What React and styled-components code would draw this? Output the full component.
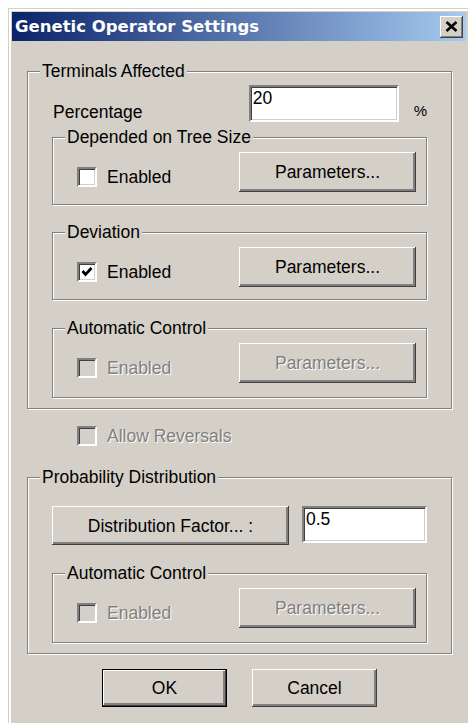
import styled, { createGlobalStyle } from "styled-components";

const GlobalStyle = createGlobalStyle`
  html, body {
    margin: 0;
    background: #ffffff;
    overflow: hidden;
  }
  body {
    font-family: "Liberation Sans", Arial, sans-serif;
  }
`;

const Window = styled.div`
  box-sizing: border-box;
  width: 462px;
  min-height: 740px;
  margin: 8px 0 0 8px;
  padding: 3px;
  border: 1px solid #d4d0c8;
  box-shadow: inset 2px 2px 0 #ffffff;
  background: #d4d0c8;
`;

const TitleBar = styled.div`
  display: flex;
  align-items: center;
  justify-content: space-between;
  height: 29px;
  padding: 0 3px;
  background: linear-gradient(to right, #0a246a, #a6caf0);
`;

const Title = styled.span`
  font-family: "DejaVu Sans", sans-serif;
  font-size: 16.5px;
  font-weight: bold;
  color: #ffffff;
  white-space: nowrap;
`;

const CloseButton = styled.div`
  box-sizing: border-box;
  display: flex;
  align-items: center;
  justify-content: center;
  width: 23px;
  height: 22px;
  background: #d4d0c8;
  box-shadow: inset -1px -1px 0 #404040, inset 1px 1px 0 #ffffff,
    inset -2px -2px 0 #808080;
`;

const Content = styled.div`
  padding: 20px 14px 0 15px;
  font-size: 17.5px;
  line-height: 20px;
  color: #000000;
`;

const Group = styled.fieldset`
  min-width: 0;
  margin: ${(p) => p.$mt || 0}px 0 0;
  padding: ${(p) => p.$pt}px ${(p) => p.$pr}px ${(p) => p.$pb}px 24px;
  border: 1px solid #808080;
  box-shadow: 1px 1px 0 #ffffff, inset 1px 1px 0 #ffffff;
`;

const Caption = styled.legend`
  margin-left: -12px;
  padding: 0 2px;
  background: #d4d0c8;
  white-space: nowrap;
`;

const FieldRow = styled.div`
  display: flex;
  align-items: flex-start;
`;

const FieldLabel = styled.span`
  width: 199px;
  padding-left: 1px;
  margin-top: 17px;
`;

const Unit = styled.span`
  margin: 16px 0 0 15px;
  font-size: 15px;
`;

const TextBox = styled.input`
  box-sizing: border-box;
  width: ${(p) => p.$w}px;
  height: 37px;
  margin: 0;
  padding: 1px 2px 12px;
  border: 2px solid;
  border-color: #808080 #ffffff #ffffff #808080;
  box-shadow: inset 1px 1px 0 #404040, inset -1px -1px 0 #d4d0c8;
  background: #ffffff;
  font: inherit;
  line-height: 20px;
  color: #000000;
  outline: none;
`;

const Button = styled.button`
  box-sizing: border-box;
  flex: none;
  width: ${(p) => p.$w}px;
  height: ${(p) => p.$h}px;
  margin: 0;
  padding: 0;
  border: ${(p) => (p.$default ? "1px solid #000000" : "none")};
  background: #d4d0c8;
  box-shadow: inset -1px -1px 0 #404040, inset 1px 1px 0 #ffffff,
    inset -3px -3px 0 #808080;
  font: inherit;
  line-height: 20px;
  color: #000000;

  &:disabled {
    color: #808080;
    text-shadow: 1px 1px 0 #ffffff;
  }
`;

const OptionRow = styled.div`
  display: flex;
  align-items: flex-start;
  justify-content: space-between;
`;

const Check = styled.label`
  display: flex;
  align-items: center;
  gap: 10px;
  margin: ${(p) => p.$mt}px 0 0 ${(p) => p.$ml || 0}px;
  color: ${(p) => (p.$disabled ? "#808080" : "#000000")};
  text-shadow: ${(p) => (p.$disabled ? "1px 1px 0 #ffffff" : "none")};
`;

const Box = styled.span`
  box-sizing: border-box;
  display: flex;
  align-items: center;
  justify-content: center;
  width: 20px;
  height: 20px;
  border: 2px solid;
  border-color: #808080 #ffffff #ffffff #808080;
  box-shadow: inset 1px 1px 0 #404040, inset -1px -1px 0 #d4d0c8;
  background: ${(p) => (p.$disabled ? "#d4d0c8" : "#ffffff")};
`;

const FactorRow = styled.div`
  display: flex;
  gap: 13px;
`;

const ButtonRow = styled.div`
  display: flex;
  justify-content: center;
  gap: 25px;
  margin-top: 15px;
`;

function CloseGlyph() {
  return (
    <svg width="13" height="11" viewBox="0 0 13 11">
      <path d="M1.5 1 L11.5 10 M11.5 1 L1.5 10" stroke="#000" strokeWidth="2.6" fill="none" />
    </svg>
  );
}

function CheckOption({ label, checked, disabled, mt, ml }) {
  return (
    <Check $mt={mt} $ml={ml} $disabled={disabled}>
      <Box $disabled={disabled}>
        {checked && (
          <svg width="14" height="14" viewBox="0 0 14 14">
            <path d="M2.5 6 L5.5 9.5 L11.5 3" stroke="#000" strokeWidth="2.8" fill="none" />
          </svg>
        )}
      </Box>
      {label}
    </Check>
  );
}

// "Enabled" checkbox plus its Parameters... button, framed with a caption
function SubGroup({ title, checked, disabled, mt, pb = 12 }) {
  return (
    <Group $mt={mt} $pt={5} $pr={10} $pb={pb}>
      <Caption>{title}</Caption>
      <OptionRow>
        <CheckOption label="Enabled" checked={checked} disabled={disabled} mt={15} />
        <Button $w={177} $h={40} disabled={disabled}>
          Parameters...
        </Button>
      </OptionRow>
    </Group>
  );
}

export default function App() {
  return (
    <>
      <GlobalStyle />
      <Window>
        <TitleBar>
          <Title>Genetic Operator Settings</Title>
          <CloseButton>
            <CloseGlyph />
          </CloseButton>
        </TitleBar>
        <Content>
          <Group $pt={4} $pr={24} $pb={10}>
            <Caption>Terminals Affected</Caption>
            <FieldRow>
              <FieldLabel>Percentage</FieldLabel>
              <TextBox $w={150} value="20" readOnly />
              <Unit>%</Unit>
            </FieldRow>
            <SubGroup title="Depended on Tree Size" mt={5} />
            <SubGroup title="Deviation" checked mt={17} />
            <SubGroup title="Automatic Control" disabled mt={18} pb={14} />
          </Group>

          <CheckOption label="Allow Reversals" disabled mt={17} ml={50} />

          <Group $mt={21} $pt={19} $pr={24} $pb={10}>
            <Caption>Probability Distribution</Caption>
            <FactorRow>
              <Button $w={237} $h={39}>Distribution Factor... :</Button>
              <TextBox $w={125} value="0.5" readOnly />
            </FactorRow>
            <SubGroup title="Automatic Control" disabled mt={18} pb={14} />
          </Group>

          <ButtonRow>
            <Button $w={125} $h={38} $default>
              OK
            </Button>
            <Button $w={125} $h={38}>
              Cancel
            </Button>
          </ButtonRow>
        </Content>
      </Window>
    </>
  );
}
